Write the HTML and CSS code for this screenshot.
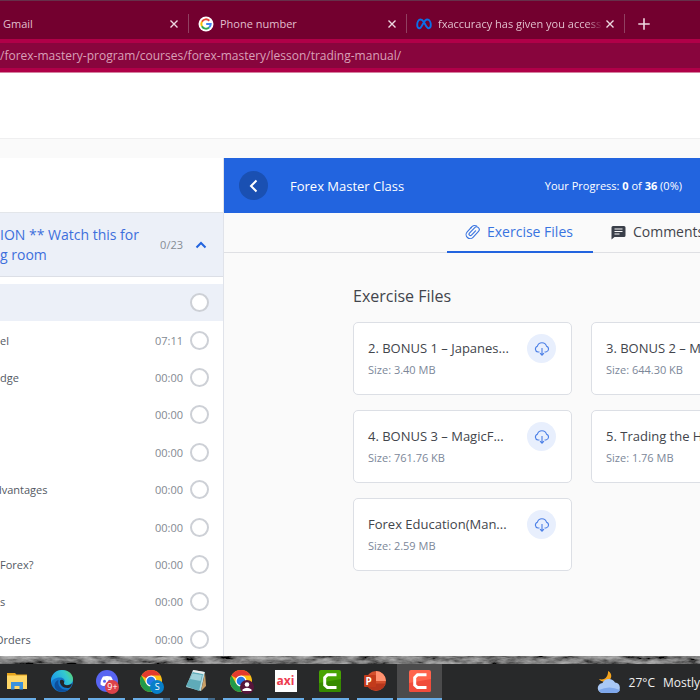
FILE: index.html
```html
<!DOCTYPE html>
<html lang="en">
<head>
<meta charset="utf-8">
<title>Forex Master Class</title>
<link rel="stylesheet" href="styles.css">
</head>
<body>
<header class="browser">
  <div class="tabstrip">
    <div class="tab tab-first"><span class="tab-title">Gmail</span><button class="close" aria-label="Close Gmail"><svg viewBox="0 0 14 14"><path d="M3.500 3.500l7 7M10.500 3.500l-7 7"/></svg></button></div>
    <div class="tab">
      <svg class="favicon" viewBox="0 0 16 16"><circle cx="8" cy="8" r="7.500" fill="#fff"/><g fill="none" stroke-width="2"><path d="M11.300 4.700A4.700 4.700 0 0 0 3.900 5.700" stroke="#ea4335"/><path d="M3.900 5.700A4.700 4.700 0 0 0 3.900 10.300" stroke="#fbbc05"/><path d="M3.900 10.300A4.700 4.700 0 0 0 11.100 11.500" stroke="#34a853"/><path d="M11.100 11.500A4.700 4.700 0 0 0 12.700 8H8.200" stroke="#4285f4"/></g></svg>
      <span class="tab-title">Phone number</span><button class="close" aria-label="Close Phone number"><svg viewBox="0 0 14 14"><path d="M3.500 3.500l7 7M10.500 3.500l-7 7"/></svg></button></div>
    <div class="tab">
      <svg class="favicon" viewBox="0 0 16 16"><path d="M8 6.200C6.800 4.300 5.700 3.500 4.500 3.500C2.500 3.500 1.200 6.200 1.200 9C1.200 11 2 12.200 3.500 12.200C6 12.200 7.600 3.500 11.300 3.500C13.400 3.500 14.800 6.300 14.800 9.100C14.800 11.100 14 12.200 12.600 12.200C10.700 12.200 9.500 8.600 8 6.200" fill="none" stroke="#0b6fe8" stroke-width="1.900"/></svg>
      <span class="tab-title tab-fade">fxaccuracy has given you access t</span><button class="close" aria-label="Close fxaccuracy"><svg viewBox="0 0 14 14"><path d="M3.500 3.500l7 7M10.500 3.500l-7 7"/></svg></button></div>
    <button class="newtab" aria-label="New tab"><svg viewBox="0 0 14 14"><path d="M7 2v10M2 7h10"/></svg></button>
  </div>
  <div class="address">/forex-mastery-program/courses/forex-mastery/lesson/trading-manual/</div>
</header>
<div class="site-head"></div>
<main class="course">
  <aside class="sidebar">
    <button class="section"><span class="section-title">ION ** Watch this for<br>g room</span><span class="count">0/23</span><svg class="chevron" viewBox="0 0 12 12"><path d="M1.500 8.500L6 4l4.500 4.500"/></svg></button>
    <ul class="lessons">
      <li class="active"><span class="name"></span><i class="ring"></i></li>
      <li><span class="name">el</span><span class="time">07:11</span><i class="ring"></i></li>
      <li><span class="name">dge</span><span class="time">00:00</span><i class="ring"></i></li>
      <li><span class="name"></span><span class="time">00:00</span><i class="ring"></i></li>
      <li><span class="name"></span><span class="time">00:00</span><i class="ring"></i></li>
      <li><span class="name scrolled">dvantages</span><span class="time">00:00</span><i class="ring"></i></li>
      <li><span class="name"></span><span class="time">00:00</span><i class="ring"></i></li>
      <li><span class="name">Forex?</span><span class="time">00:00</span><i class="ring"></i></li>
      <li><span class="name">s</span><span class="time">00:00</span><i class="ring"></i></li>
      <li><span class="name scrolled">Orders</span><span class="time">00:00</span><i class="ring"></i></li>
    </ul>
  </aside>
  <section class="content">
    <div class="bar">
      <button class="back" aria-label="Back"><svg viewBox="0 0 14 14"><path d="M9.500 1.500L4 7l5.500 5.500"/></svg></button>
      <h1>Forex Master Class</h1>
      <p>Your Progress: <b>0</b> of <b>36</b> (0%)</p>
    </div>
    <nav class="tabs">
      <a class="tablink current" href="#files"><svg viewBox="0 0 14 16"><g transform="rotate(43 7 8)" fill="none" stroke="currentColor" stroke-width="1.100" stroke-linecap="round"><path d="M3 5.500V11.500a4 4 0 0 0 8 0V3.500a2.700 2.700 0 0 0-5.400 0V11a1.400 1.400 0 0 0 2.800 0V5"/><path d="M3 6V4.500a4 4 0 0 1 3-3.700"/></g></svg>Exercise Files</a>
      <a class="tablink" href="#comments"><svg viewBox="0 0 14 16"><path d="M1.500 2h11A1.500 1.500 0 0 1 14 3.500v8a1.500 1.500 0 0 1-1.500 1.500H3l-3 2.500v-12A1.500 1.500 0 0 1 1.500 2z" fill="#3a3f49"/><path d="M3 5h8M3 7.500h8M3 10h5" stroke="#fafafa" stroke-width="1.100"/></svg>Comments</a>
    </nav>
    <div class="files" id="files">
      <h2>Exercise Files</h2>
      <div class="cards">
        <article class="card"><div class="meta"><h3>2. BONUS 1 – Japanes...</h3><p>Size: 3.40 MB</p></div><button class="download" aria-label="Download"><svg viewBox="0 0 16 16"><path d="M5.500 11H4A3 3 0 0 1 3.400 5.200A4.700 4.700 0 0 1 12.500 5.200A3 3 0 0 1 12 11H10.500M8 7v7M6 12.200L8 14.200l2-2"/></svg></button></article>
        <article class="card"><div class="meta"><h3>3. BONUS 2 – Ma...</h3><p>Size: 644.30 KB</p></div><button class="download" aria-label="Download"></button></article>
        <article class="card"><div class="meta"><h3>4. BONUS 3 – MagicF...</h3><p>Size: 761.76 KB</p></div><button class="download" aria-label="Download"><svg viewBox="0 0 16 16"><path d="M5.500 11H4A3 3 0 0 1 3.400 5.200A4.700 4.700 0 0 1 12.500 5.200A3 3 0 0 1 12 11H10.500M8 7v7M6 12.200L8 14.200l2-2"/></svg></button></article>
        <article class="card"><div class="meta"><h3>5. Trading the H</h3><p>Size: 1.76 MB</p></div><button class="download" aria-label="Download"></button></article>
        <article class="card"><div class="meta"><h3>Forex Education(Man...</h3><p>Size: 2.59 MB</p></div><button class="download" aria-label="Download"><svg viewBox="0 0 16 16"><path d="M5.500 11H4A3 3 0 0 1 3.400 5.200A4.700 4.700 0 0 1 12.500 5.200A3 3 0 0 1 12 11H10.500M8 7v7M6 12.200L8 14.200l2-2"/></svg></button></article>
      </div>
    </div>
  </section>
</main>
<svg class="wallpaper" aria-hidden="true"><filter id="rock" x="0" y="0" width="100%" height="100%"><feTurbulence type="fractalNoise" baseFrequency="0.06 0.2" numOctaves="4" seed="5"/><feColorMatrix values="0.7 0 0 0 -0.14 0.7 0 0 0 -0.14 0.7 0 0 0 -0.14 0 0 0 0 1"/></filter><rect width="100%" height="8" filter="url(#rock)"/></svg>
<footer class="taskbar">
  <nav class="apps">
    <button aria-label="File Explorer"><svg viewBox="0 0 24 24"><path d="M2 4h8l1.500 1.500H22V10H2z" fill="#e8a51c"/><path d="M2 6.500h20V20H2z" fill="#ffd767"/><path d="M6 13h12v7.500h-3.500V17h-5v3.500H6z" fill="#3a91dc"/></svg></button>
    <button aria-label="Edge"><svg viewBox="0 0 24 24"><defs><linearGradient id="eg" x1="0" x2="1" y1=".4" y2="0"><stop offset="0" stop-color="#1e9de8"/><stop offset=".6" stop-color="#34c9cf"/><stop offset="1" stop-color="#6ad64e"/></linearGradient></defs><circle cx="12" cy="12" r="11" fill="#1377cb"/><path d="M1 12C1 5.500 6 1 12 1c7 0 11 4.500 11 9c0 4-3 6-6.500 6c-2 0-3-1-2.500-2c2-3-.5-5.500-4-5.500C5 8.500 1.500 11 1 14z" fill="url(#eg)"/><path d="M8.500 11C7 17 12 22 18.500 20.500C15 24 8 23.500 5.500 19.500C3.500 16 5 12 8.500 11z" fill="#0d4f9b"/><path d="M10 11.500c2-2 5 .3 4 2.500c-.5 1.200 1 2.300 3 2.200c2 0 3.500-.6 5-1.700c-.5 2-1.700 3.700-2.700 4.300C14 20 9 16 10 11.500z" fill="#242628"/></svg></button>
    <button aria-label="Discord"><svg viewBox="0 0 24 24"><circle cx="12" cy="12" r="11" fill="#5865f2"/><path d="M8 7.500c3-.8 5-.8 8 0c1.800 2.500 2.500 5 2.500 8c-1.500 1.300-3 1.700-4 1.500l-.8-1.300h-3.400L9.500 17c-1 .2-2.500-.2-4-1.500c0-3 .7-5.500 2.500-8z" fill="#fff"/><circle cx="9.500" cy="12.300" r="1.500" fill="#5865f2"/><circle cx="14.500" cy="12.300" r="1.500" fill="#5865f2"/></svg><span class="badge red">9+</span></button>
    <button class="stack" aria-label="Chrome"><svg viewBox="0 0 24 24"><circle cx="12" cy="12" r="11" fill="#fbc116"/><path d="M12 12L2.470 6.500A11 11 0 0 1 21.530 6.500H12z" fill="#e33b2e"/><path d="M2.470 6.500A11 11 0 0 0 12 23l4.800-8.200L12 12 7.200 14.800z" fill="#229a4a"/><circle cx="12" cy="12" r="5.500" fill="#fff"/><circle cx="12" cy="12" r="4.300" fill="#2479e8"/></svg><span class="badge blue">S</span></button>
    <button class="stack" aria-label="Notepad"><svg viewBox="0 0 24 24"><path d="M9 1l12 2-4 19-15-4z" fill="#b5dce2"/><path d="M2 17L9 3l10 2-4 17z" fill="#5fabb8"/><path d="M8.500 4.500L18 6l-1.500 6L6 10z" fill="#9ed1da"/><path d="M9 2l11 2" stroke="#eee" stroke-width="2"/><path d="M21 4l1 13-5 5z" fill="#c99f67"/></svg></button>
    <button aria-label="Chrome profile"><svg viewBox="0 0 24 24"><circle cx="12" cy="12" r="11" fill="#fbc116"/><path d="M12 12L2.470 6.500A11 11 0 0 1 21.530 6.500H12z" fill="#e33b2e"/><path d="M2.470 6.500A11 11 0 0 0 12 23l4.800-8.200L12 12 7.200 14.800z" fill="#229a4a"/><circle cx="12" cy="12" r="5.500" fill="#fff"/><circle cx="12" cy="12" r="4.300" fill="#2479e8"/></svg><span class="badge plum"><svg viewBox="0 0 14 14"><circle cx="7" cy="4.500" r="2.300" fill="#fff"/><path d="M2.500 11V9.500Q7 6 11.500 9.500V11z" fill="#fff"/></svg></span></button>
    <button aria-label="axi"><span class="axi">axi</span></button>
    <button aria-label="Camtasia"><svg viewBox="0 0 24 24"><rect x="1" y="1" width="22" height="22" rx="2" fill="#48a302"/><path d="M1 14L23 10v11a2 2 0 0 1-2 2H3a2 2 0 0 1-2-2z" fill="#368a00"/><path d="M18.500 5.700H9.500L6.700 8.500v7.500L9.500 18.500h9" fill="none" stroke="#fff" stroke-width="3"/></svg></button>
    <button aria-label="PowerPoint"><svg viewBox="0 0 24 24"><circle cx="13" cy="12" r="10" fill="#d5502d"/><path d="M13 2a10 10 0 0 1 10 10H13z" fill="#ff9270"/><path d="M3.500 14.500h19A10 10 0 0 1 3.500 14.500z" fill="#b6361c"/><rect x="1" y="6" width="12" height="12" rx="1" fill="#c33b1b"/></svg><span class="pp">P</span></button>
    <button class="open" aria-label="Camtasia recorder"><svg viewBox="0 0 24 24"><rect x="1" y="1" width="22" height="22" rx="2" fill="#ff644d"/><path d="M1 14L23 10v11a2 2 0 0 1-2 2H3a2 2 0 0 1-2-2z" fill="#f04c3b"/><path d="M18.500 5.700H9.500L6.700 8.500v7.500L9.500 18.500h9" fill="none" stroke="#fff" stroke-width="3"/></svg></button>
  </nav>
  <div class="weather"><svg viewBox="0 0 24 24"><path d="M11 1c5 2.500 4 9-1 10.500c-3.500 1-7-.5-8-2.500c6 2 9.500-3 9-8z" fill="#f7a51d"/><path d="M6 23A5 5 0 0 1 5.500 13A7 7 0 0 1 18 12.500A5.300 5.300 0 0 1 18.500 23z" fill="#a9c8f6"/><path d="M2 20Q12 15 23 20Q21.500 23 18.500 23H6Q3 23 2 20z" fill="#7fa8ec"/></svg><span>27°C</span><span>Mostly</span></div>
</footer>
</body>
</html>
```
FILE: styles.css
```css
* { box-sizing: border-box; }

body {
  margin: 0;
  height: 100vh;
  display: flex;
  flex-direction: column;
  overflow: hidden;
  background: #fafafa;
  font-family: "Open Sans", "Noto Sans", sans-serif;
  color: #42454c;
}

button {
  padding: 0;
  border: 0;
  background: none;
  font: inherit;
  color: inherit;
}

h1, h2, h3, p, ul { margin: 0; padding: 0; font-weight: 400; }
svg { display: block; flex: none; }
a { color: inherit; text-decoration: none; }

/* Browser chrome */
.browser {
  flex: none;
  background: #b00048;
  border-bottom: 1px solid #d5809f;
}

.tabstrip {
  display: flex;
  align-items: center;
  height: 39px;
  padding-top: 7px;
  border-top: 1px solid #66304a;
  background: #73002f;
  color: #e2bfcd;
  font-size: 11px;
}

.tab {
  flex: none;
  display: flex;
  align-items: center;
  gap: 6px;
  width: 218px;
  height: 19px;
  padding: 0 7px 0 9px;
  border-right: 1px solid #914061;
  line-height: 16px;
}

.tab-first { width: 189px; padding-left: 3px; }
.tab-title { flex: 1; overflow: hidden; white-space: nowrap; }
.tab-fade { margin-right: -6px; mask-image: linear-gradient(90deg, #000 90%, transparent 100%); }
.favicon { width: 16px; height: 16px; }
.close svg { width: 14px; height: 14px; }
.newtab { margin-left: 11px; }
.newtab svg { width: 16px; height: 16px; }

.close path, .newtab path {
  fill: none;
  stroke: #eed8e1;
  stroke-width: 1.4;
}

.address {
  margin: 4px 0;
  height: 25px;
  background: #88053d;
  color: #d9a0b8;
  font-size: 12px;
  line-height: 25px;
  white-space: nowrap;
}

.site-head {
  flex: none;
  height: 66px;
  margin-bottom: 19px;
  background: #fff;
  border-bottom: 1px solid #efeff0;
}

/* Course */
.course { flex: 1; min-height: 0; display: flex; }

.sidebar {
  flex: none;
  display: flex;
  flex-direction: column;
  width: 224px;
  padding-top: 54px;
  background: #fff;
  border-right: 1px solid #e0e3ea;
}

.section {
  flex: none;
  display: flex;
  align-items: center;
  height: 65px;
  padding-right: 16px;
  border-top: 1px solid #e3e6ea;
  border-bottom: 1px solid #dcdfe6;
  background: #ecf0f8;
  text-align: left;
}

.section-title {
  flex: 1;
  color: #3d6fdc;
  font-size: 14px;
  line-height: 20px;
  white-space: nowrap;
}

.count { margin-right: 12px; color: #868c94; font-size: 11px; }
.chevron { width: 12px; height: 12px; }
.chevron path { fill: none; stroke: #2264df; stroke-width: 2; }

.lessons {
  flex: 1;
  display: flex;
  flex-direction: column;
  margin: 7px 0 -2px;
  list-style: none;
}

.lessons li {
  flex: 1;
  display: flex;
  align-items: center;
  gap: 7px;
  padding-right: 14px;
  font-size: 11px;
}

.lessons .active { background: #ecf0f8; }
.name { flex: 1; color: #535963; }
.scrolled { margin-left: -5px; }
.time { color: #838991; }

.ring {
  width: 19px;
  height: 19px;
  border: 2px solid #cdd0d6;
  border-radius: 50%;
  background: #fff;
}

.content { flex: 1; min-width: 0; overflow: hidden; }

.bar {
  display: flex;
  align-items: center;
  height: 55px;
  padding: 0 18px 0 15px;
  background: #2264df;
  color: #fff;
}

.back {
  display: grid;
  place-items: center;
  width: 29px;
  height: 29px;
  border-radius: 50%;
  background: #1a50b2;
}

.back svg { width: 14px; height: 14px; }
.back path { fill: none; stroke: #fff; stroke-width: 2; }
.bar h1 { flex: 1; margin-left: 22px; font-size: 13px; }
.bar p { font-size: 11px; }

.tabs {
  display: flex;
  height: 40px;
  padding-left: 223px;
  border-bottom: 1px solid #dfe0e4;
}

.tablink {
  flex: none;
  display: flex;
  align-items: center;
  gap: 7px;
  height: 40px;
  padding: 0 20px 3px 18px;
  font-size: 14px;
}

.tablink svg { width: 15px; height: 16px; }

.current {
  padding-bottom: 1px;
  color: #3974e0;
  border-bottom: 2px solid #2264df;
}

.files { padding: 31px 0 0 129px; }
.files h2 { font-size: 16px; line-height: 24px; }

.cards {
  display: grid;
  grid-template-columns: repeat(2, 219px);
  gap: 15px 19px;
  margin-top: 14px;
}

.card {
  display: flex;
  justify-content: space-between;
  height: 73px;
  padding: 11px 15px 0 14px;
  border: 1px solid #dcdfe5;
  border-radius: 5px;
  background: #fff;
}

.card h3 { font-size: 13px; line-height: 28px; white-space: nowrap; }
.card p { color: #7c8799; font-size: 11px; line-height: 16px; }

.download {
  display: grid;
  place-items: center;
  width: 29px;
  height: 29px;
  border-radius: 50%;
  background: #e8effd;
}

.download svg { width: 16px; height: 16px; }
.download path { fill: none; stroke: #4b7fe6; stroke-width: 1.1; }

/* Desktop */
.wallpaper { position: relative; width: 100%; height: 8px; background: #555; }

.taskbar {
  flex: none;
  display: flex;
  justify-content: space-between;
  height: 36px;
  background: #28292a;
  color: #f0f0f0;
  overflow: hidden;
}

.apps {
  display: grid;
  grid-template-columns: repeat(10, 1fr);
  width: 447px;
  margin-left: -5px;
}

.apps button {
  position: relative;
  display: grid;
  place-items: center;
  margin: 0 4px;
  border-bottom: 2px solid #69ade6;
}

.apps > button > svg { width: 24px; height: 24px; }
.apps .open { margin: 0; background: #4b4b4c; }
.apps .stack { border-image: linear-gradient(90deg, #69ade6 78%, #436a8b 78%) 2; border-width: 0 0 2px; }

.badge {
  position: absolute;
  left: 17px;
  top: 16px;
  width: 14px;
  height: 14px;
  border-radius: 50%;
  color: #fff;
  font-size: 9px;
  line-height: 14px;
  text-align: center;
}

.red { background: #dc4249; }
.blue { background: #087fc8; }
.plum { background: #57153b; }

.axi {
  width: 22px;
  height: 22px;
  background: #fff;
  color: #ed3d50;
  font-size: 12px;
  font-weight: 700;
  line-height: 22px;
  text-align: center;
}

.pp {
  position: absolute;
  left: 9px;
  top: 11px;
  color: #fff;
  font-size: 10px;
  font-weight: 700;
  line-height: 12px;
}

.weather {
  flex: none;
  display: flex;
  align-items: center;
  gap: 8px;
  font-size: 12px;
}

.weather svg { width: 24px; height: 24px; }
```
